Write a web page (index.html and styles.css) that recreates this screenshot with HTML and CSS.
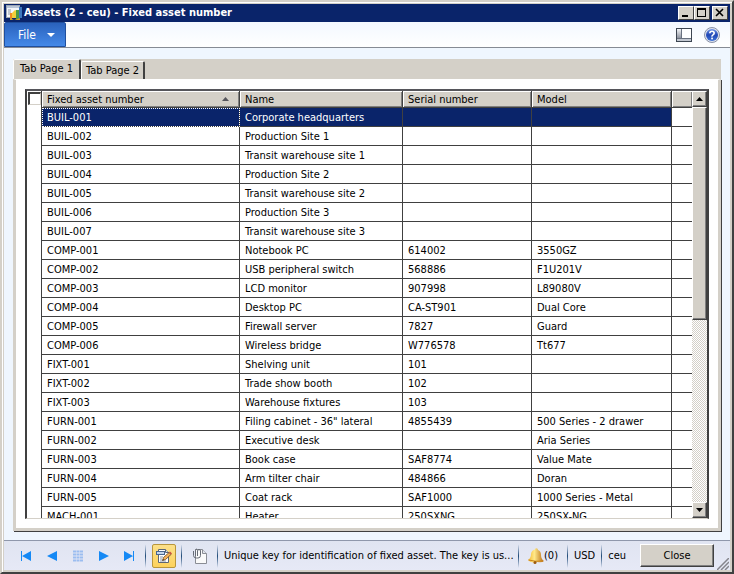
FILE: index.html
```html
<!DOCTYPE html>
<html lang="en">
<head>
    <meta charset="UTF-8">
    <meta name="viewport" content="width=device-width, initial-scale=1.0">
    <title>Assets (2 - ceu) - Fixed asset number</title>
    <link rel="stylesheet" href="styles.css">
</head>
<body>
    <div class="window">
        <header class="title-bar">
            <svg class="app-icon" width="16" height="16" viewBox="0 0 16 16">
                <rect x="0.5" y="0.5" width="13" height="12" fill="#f4f6fa" stroke="#9aa5b5"/>
                <rect x="1" y="1" width="12" height="2" fill="#b9c6d8"/>
                <path d="M2 5h3M2 7h3M2 9h2" stroke="#8b98ab"/>
                <rect x="4" y="8" width="2" height="7" fill="#f08a24"/>
                <path d="M6 13V8l3-3 2 1v7z" fill="#f2cf3b"/>
                <rect x="10" y="5" width="3" height="9" fill="#4d9a45"/>
                <path d="M13 2h3v11h-3z" fill="#3d78bd"/>
                <path d="M4 13l4 2 6-2v2H4z" fill="#c8a02a"/>
            </svg>
            <h1>Assets (2 - ceu) - Fixed asset number</h1>
            <button type="button" class="caption-btn" aria-label="Minimize">
                <svg width="12" height="10" viewBox="0 0 12 10"><rect x="2" y="7" width="6" height="2" fill="#000"/></svg>
            </button>
            <button type="button" class="caption-btn" aria-label="Maximize">
                <svg width="12" height="10" viewBox="0 0 12 10"><path d="M1 0h9v9H1zM2 2v6h7V2z" fill="#000" fill-rule="evenodd"/></svg>
            </button>
            <button type="button" class="caption-btn caption-close" aria-label="Close window">
                <svg width="12" height="10" viewBox="0 0 12 10"><path d="M2 1l7 7M9 1l-7 7" stroke="#000" stroke-width="1.600"/></svg>
            </button>
        </header>

        <nav class="toolbar">
            <button type="button" class="file-btn">
                File
                <svg width="8" height="4" viewBox="0 0 8 4"><path d="M0 0h8L4 4z" fill="#fff"/></svg>
            </button>
            <button type="button" class="icon-btn" aria-label="Layout">
                <svg width="16" height="14" viewBox="0 0 16 14">
                    <defs>
                        <linearGradient id="paneGrey" x1="0" y1="0" x2="0" y2="1">
                            <stop offset="0" stop-color="#f4f5f8"/>
                            <stop offset="1" stop-color="#8d939f"/>
                        </linearGradient>
                    </defs>
                    <rect x="0.5" y="0.5" width="15" height="13" fill="#fff" stroke="#3d4652"/>
                    <rect x="1" y="1" width="4" height="9" fill="url(#paneGrey)"/>
                    <rect x="1" y="11" width="14" height="2" fill="#c3c8d1"/>
                    <path d="M5.500 1v9M1 10.500h14" stroke="#6a7280"/>
                </svg>
            </button>
            <button type="button" class="icon-btn" aria-label="Help">
                <svg width="16" height="16" viewBox="0 0 16 16">
                    <defs>
                        <linearGradient id="helpBlue" x1="0" y1="0" x2="0" y2="1">
                            <stop offset="0" stop-color="#6f94e6"/>
                            <stop offset="0.5" stop-color="#2046b4"/>
                            <stop offset="1" stop-color="#3e74d8"/>
                        </linearGradient>
                    </defs>
                    <circle cx="8" cy="8" r="7.500" fill="#dfe3ee" stroke="#8992a8"/>
                    <circle cx="8" cy="8" r="6" fill="url(#helpBlue)"/>
                    <path d="M5.800 6.300Q5.900 4.200 8 4.200T10.200 6.100Q10.200 7.200 9 7.900T8 9.600" fill="none" stroke="#fff" stroke-width="1.600"/>
                    <rect x="7.200" y="10.600" width="1.700" height="1.700" fill="#fff"/>
                </svg>
            </button>
        </nav>

        <main class="content">
            <div class="tabs">
                <button type="button" class="tab active">Tab Page 1</button>
                <button type="button" class="tab">Tab Page 2</button>
            </div>
            <div class="panel">
                <div class="grid">
                    <div class="grid-view">
                        <table id="assetTable">
                            <colgroup>
                                <col class="col-check">
                                <col class="col-number">
                                <col class="col-name">
                                <col class="col-serial">
                                <col class="col-model">
                                <col>
                            </colgroup>
                            <thead>
                                <tr>
                                    <td class="check"><input type="checkbox" aria-label="Select all"></td>
                                    <th>Fixed asset number <svg class="sort" width="7" height="4" viewBox="0 0 7 4"><path d="M3.500 0L7 4H0z" fill="#55555c"/></svg></th>
                                    <th>Name</th>
                                    <th>Serial number</th>
                                    <th>Model</th>
                                    <th class="filler"></th>
                                </tr>
                            </thead>
                            <tbody>
                                <tr class="selected"><td></td><td class="current">BUIL-001</td><td>Corporate headquarters</td><td></td><td></td><td></td></tr>
                                <tr><td></td><td>BUIL-002</td><td>Production Site 1</td><td></td><td></td><td></td></tr>
                                <tr><td></td><td>BUIL-003</td><td>Transit warehouse site 1</td><td></td><td></td><td></td></tr>
                                <tr><td></td><td>BUIL-004</td><td>Production Site 2</td><td></td><td></td><td></td></tr>
                                <tr><td></td><td>BUIL-005</td><td>Transit warehouse site 2</td><td></td><td></td><td></td></tr>
                                <tr><td></td><td>BUIL-006</td><td>Production Site 3</td><td></td><td></td><td></td></tr>
                                <tr><td></td><td>BUIL-007</td><td>Transit warehouse site 3</td><td></td><td></td><td></td></tr>
                                <tr><td></td><td>COMP-001</td><td>Notebook PC</td><td>614002</td><td>3550GZ</td><td></td></tr>
                                <tr><td></td><td>COMP-002</td><td>USB peripheral switch</td><td>568886</td><td>F1U201V</td><td></td></tr>
                                <tr><td></td><td>COMP-003</td><td>LCD monitor</td><td>907998</td><td>L89080V</td><td></td></tr>
                                <tr><td></td><td>COMP-004</td><td>Desktop PC</td><td>CA-ST901</td><td>Dual Core</td><td></td></tr>
                                <tr><td></td><td>COMP-005</td><td>Firewall server</td><td>7827</td><td>Guard</td><td></td></tr>
                                <tr><td></td><td>COMP-006</td><td>Wireless bridge</td><td>W776578</td><td>Tt677</td><td></td></tr>
                                <tr><td></td><td>FIXT-001</td><td>Shelving unit</td><td>101</td><td></td><td></td></tr>
                                <tr><td></td><td>FIXT-002</td><td>Trade show booth</td><td>102</td><td></td><td></td></tr>
                                <tr><td></td><td>FIXT-003</td><td>Warehouse fixtures</td><td>103</td><td></td><td></td></tr>
                                <tr><td></td><td>FURN-001</td><td>Filing cabinet - 36" lateral</td><td>4855439</td><td>500 Series - 2 drawer</td><td></td></tr>
                                <tr><td></td><td>FURN-002</td><td>Executive desk</td><td></td><td>Aria Series</td><td></td></tr>
                                <tr><td></td><td>FURN-003</td><td>Book case</td><td>SAF8774</td><td>Value Mate</td><td></td></tr>
                                <tr><td></td><td>FURN-004</td><td>Arm tilter chair</td><td>484866</td><td>Doran</td><td></td></tr>
                                <tr><td></td><td>FURN-005</td><td>Coat rack</td><td>SAF1000</td><td>1000 Series - Metal</td><td></td></tr>
                                <tr><td></td><td>MACH-001</td><td>Heater</td><td>250SXNG</td><td>250SX-NG</td><td></td></tr>
                            </tbody>
                        </table>
                    </div>
                    <div class="scrollbar">
                        <button type="button" class="scroll-btn" aria-label="Scroll up">
                            <svg width="7" height="4" viewBox="0 0 7 4"><path d="M3.500 0L7 4H0z" fill="#000"/></svg>
                        </button>
                        <div class="track"><div class="thumb"></div></div>
                        <button type="button" class="scroll-btn" aria-label="Scroll down">
                            <svg width="7" height="4" viewBox="0 0 7 4"><path d="M0 0h7L3.500 4z" fill="#000"/></svg>
                        </button>
                    </div>
                </div>
            </div>
        </main>

        <footer class="status-bar">
            <div class="record-nav">
                <button type="button" class="icon-btn" aria-label="First record">
                    <svg width="12" height="12" viewBox="0 0 12 12"><path d="M1 1h1v10H1zM11 1v10L2 6z" fill="#1589f5"/></svg>
                </button>
                <button type="button" class="icon-btn" aria-label="Previous record">
                    <svg width="12" height="12" viewBox="0 0 12 12"><path d="M11 1v10L1 6z" fill="#1589f5"/></svg>
                </button>
                <button type="button" class="icon-btn" aria-label="Grid view">
                    <svg width="12" height="12" viewBox="0 0 12 12">
                        <path d="M1 1.500h10M1 4.500h10M1 7.500h10M1 10.500h10" stroke="#9bbdf0" stroke-width="2" stroke-dasharray="3 0.500"/>
                    </svg>
                </button>
                <button type="button" class="icon-btn" aria-label="Next record">
                    <svg width="12" height="12" viewBox="0 0 12 12"><path d="M1 1v10l10-5z" fill="#1589f5"/></svg>
                </button>
                <button type="button" class="icon-btn" aria-label="Last record">
                    <svg width="12" height="12" viewBox="0 0 12 12"><path d="M9 1h1v10H9zM0 1v10l9-5z" fill="#1589f5"/></svg>
                </button>
            </div>
            <span class="separator"></span>
            <button type="button" class="icon-btn edit-btn" aria-label="Edit">
                <svg width="16" height="16" viewBox="0 0 16 16">
                    <path d="M2.500 1.500h7l3 3v10h-10z" fill="#fff" stroke="#5c6675"/>
                    <path d="M9.500 1.500v3h3" fill="#d5dbe5" stroke="#5c6675"/>
                    <rect x="0.500" y="3.500" width="8" height="3" fill="#c3d6ee" stroke="#48668f"/>
                    <path d="M4 9h3M4 11h2M4 13h6" stroke="#8b97a8"/>
                    <path d="M6.500 12.500l1-3 5.500-5 2 2-5.500 5z" fill="#f4b25a" stroke="#704a20" stroke-width="0.800"/>
                    <path d="M13 4.500l1-1 2 2-1 1z" fill="#c94b40"/>
                    <path d="M6.500 12.500l0.500-1.500 1 1z" fill="#222"/>
                </svg>
            </button>
            <span class="separator"></span>
            <button type="button" class="icon-btn attach-btn" aria-label="Attachments">
                <svg width="16" height="16" viewBox="0 0 16 16">
                    <path d="M3.500 1.500h7l4 4v10h-11z" fill="#fafafa" stroke="#8a8d95"/>
                    <path d="M10.500 1.500v4h4" fill="#e0e3ea" stroke="#8a8d95"/>
                    <path d="M1.500 3v4.500q0 2.500 3 2.500h1.500q2.500 0 2.500-2.500V3q0-1.500-1.500-1.500T5.500 3v5M3.500 8V2.500Q3.500 1 5 1" fill="none" stroke="#666b75"/>
                </svg>
            </button>
            <span class="separator"></span>
            <p class="help-text">Unique key for identification of fixed asset. The key is us...</p>
            <span class="separator"></span>
            <button type="button" class="icon-btn alert-btn">
                <svg width="16" height="16" viewBox="0 0 16 16">
                    <defs>
                        <linearGradient id="bellGold" x1="0" y1="0" x2="1" y2="0">
                            <stop offset="0" stop-color="#f3b62c"/>
                            <stop offset="0.4" stop-color="#ffe98a"/>
                            <stop offset="1" stop-color="#b76a10"/>
                        </linearGradient>
                    </defs>
                    <path d="M7 1.500Q7 0 8.500 0.200T10 2Q13 3 13 7q0 4 3 6-2 2-7 1-2 2-4 0.500Q2 14 0 12q3-2 3-6 0.500-4 4-4.500z" fill="url(#bellGold)"/>
                    <path d="M0.500 12q7 2 14.500 1" fill="none" stroke="#c98218"/>
                    <circle cx="7" cy="14.500" r="1.500" fill="#9c5a10"/>
                </svg>
                (0)
            </button>
            <span class="separator"></span>
            <span class="currency">USD</span>
            <span class="separator"></span>
            <span class="company">ceu</span>
            <button type="button" class="close-btn">Close</button>
            <svg class="grip" width="12" height="12" viewBox="0 0 12 12">
                <path d="M0 12L12 0M4 12l8-8M8 12l4-4" stroke="#85858c" stroke-width="1.500"/>
            </svg>
        </footer>
    </div>
</body>
</html>
```
FILE: styles.css
```css
* {
    margin: 0;
    padding: 0;
    box-sizing: border-box;
}

body {
    font-family: "DejaVu Sans Condensed", Tahoma, "DejaVu Sans", sans-serif;
    font-size: 11px;
    line-height: 14px;
    color: #000;
    background-color: #d4d0c8;
}

button {
    font: inherit;
    color: inherit;
    border: none;
    background: none;
}

svg {
    display: block;
    flex: none;
}

.window {
    display: flex;
    flex-direction: column;
    height: 100vh;
    padding: 2px;
    border: 2px solid #404040;
    border-top-color: #d4d0c8;
    border-left-color: #d4d0c8;
    box-shadow: inset 1px 1px #fff;
    background-color: #d4d0c8;
}

/* Title bar */
.title-bar {
    display: flex;
    align-items: center;
    flex: none;
    height: 18px;
    padding: 0 2px;
    background-color: #0a246a;
    color: #fff;
}

.title-bar h1 {
    flex: 1;
    margin-left: 2px;
    font-size: 11px;
    font-weight: bold;
}

.caption-btn {
    display: flex;
    align-items: center;
    justify-content: center;
    width: 16px;
    height: 14px;
    background-color: #d4d0c8;
    border: 1px solid #404040;
    border-top-color: #fff;
    border-left-color: #fff;
}

.caption-close {
    margin-left: 2px;
}

/* Toolbar */
.toolbar {
    display: flex;
    align-items: center;
    flex: none;
    height: 26px;
    padding-right: 10px;
    gap: 12px;
    background: linear-gradient(#f3f8ff, #fff);
    border-bottom: 1px solid #868b94;
}

.icon-btn {
    display: flex;
    align-items: center;
    justify-content: center;
}

.file-btn {
    display: flex;
    align-items: center;
    align-self: stretch;
    gap: 11px;
    width: 62px;
    margin-right: auto;
    padding: 0 13px;
    font-size: 12px;
    color: #fff;
    background: linear-gradient(#2a62bd, #4489e8);
    border: 1px solid #1f4f9e;
    border-radius: 2px 2px 0 0;
}

/* Tabs and grid */
.content {
    display: flex;
    flex-direction: column;
    flex: 1;
    min-height: 0;
    padding: 11px 9px 9px;
    background-color: #eff6fe;
}

.tabs {
    display: flex;
    align-items: flex-end;
    flex: none;
    height: 20px;
    background-color: #d4d0c8;
}

.tab {
    height: 18px;
    padding: 0 4px;
    border: 1px solid #fff;
    border-right: 2px solid #404040;
    border-bottom: none;
    border-radius: 2px 2px 0 0;
    background-color: #d4d0c8;
}

.tab.active {
    height: 20px;
    padding: 0 6px 1px;
}

.panel {
    display: flex;
    flex: 1;
    min-height: 0;
    padding: 9px 9px 9px;
    border: 3px solid #d4d0c8;
    border-top: 1px solid #fff;
    background-color: #fff;
    box-shadow: 1px 1px #404040;
}

.grid {
    display: flex;
    flex: 1;
    min-width: 0;
    border: 2px solid #404040;
    border-bottom: 1px solid #d4d0c8;
    border-top-color: #55555a;
}

.grid-view {
    flex: 1;
    min-width: 0;
    overflow: hidden;
}

table {
    width: 100%;
    table-layout: fixed;
    border-collapse: separate;
    border-spacing: 0;
}

.col-check {
    width: 15px;
}

.col-number {
    width: 198px;
}

.col-name {
    width: 163px;
}

.col-serial {
    width: 129px;
}

.col-model {
    width: 140px;
}

th, td {
    height: 19px;
    padding: 2px 5px 0;
    text-align: left;
    font-weight: normal;
    white-space: nowrap;
    border-right: 1px solid #404040;
    border-bottom: 1px solid #404040;
}

th {
    height: 17px;
    background-color: #d4d0c8;
    box-shadow: inset 1px 1px #fff, inset -1px -1px #808080;
}

th:last-child, td:last-child {
    border-right: none;
}

td:first-child {
    padding: 0;
    border-bottom: none;
}

.check input {
    display: block;
    appearance: none;
    width: 13px;
    height: 13px;
    margin: 0 0 2px 1px;
    background-color: #fff;
    border: 2px solid #404040;
    border-right: 1px solid #d4d0c8;
    border-bottom: 1px solid #d4d0c8;
}

.check {
    height: 17px;
}

.sort {
    float: right;
    margin: 4px 5px;
}

.selected td:not(:first-child):not(:last-child) {
    background-color: #0a246a;
    color: #fff;
}

.selected .current {
    outline: 1px dotted #fff;
    outline-offset: -1px;
}

.scrollbar {
    display: flex;
    flex-direction: column;
    flex: none;
    width: 15px;
}

.scroll-btn, .thumb, .close-btn {
    background-color: #d4d0c8;
    border: 1px solid #404040;
    border-top-color: #fff;
    border-left-color: #fff;
    box-shadow: inset -1px -1px #808080;
}

.scroll-btn {
    display: flex;
    align-items: center;
    justify-content: center;
    height: 16px;
}

.track {
    flex: 1;
    background: repeating-conic-gradient(#d4d0c8 0% 25%, #fff 0% 50%) 0 0 / 2px 2px;
}

.thumb {
    height: 54%;
}

/* Status bar */
.status-bar {
    display: flex;
    align-items: center;
    flex: none;
    height: 30px;
    padding: 0 1px 0 16px;
    border-top: 1px solid #8f97ab;
    background: linear-gradient(#e0e4f1, #e6e9f6);
}

.record-nav {
    display: flex;
    gap: 14px;
    margin-right: 9px;
}

.separator {
    flex: none;
    width: 1px;
    height: 24px;
    background: linear-gradient(#e6e9f6, #1f4a78 50%, #e6e9f6);
}

.edit-btn {
    width: 24px;
    height: 24px;
    margin: 0 5px 0 6px;
    border: 1px solid #b8963c;
    border-radius: 2px;
    background: linear-gradient(#fbe08a, #fdd25c);
}

.attach-btn {
    margin: 0 9px 0 10px;
}

.help-text {
    flex: 1;
    min-width: 0;
    padding-left: 6px;
    overflow: hidden;
    white-space: nowrap;
}

.alert-btn {
    margin: 0 9px;
}

.currency, .company {
    margin: 0 6px;
}

.company {
    margin-right: 14px;
}

.close-btn {
    width: 74px;
    height: 23px;
}

.grip {
    align-self: flex-end;
    margin-left: 3px;
}
```
